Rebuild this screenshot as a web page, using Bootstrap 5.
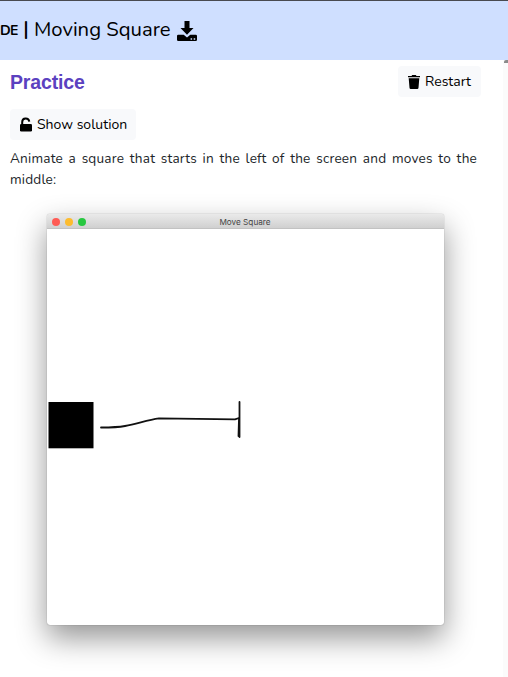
<!DOCTYPE html>
<html lang="en">
<head>
<meta charset="utf-8">
<meta name="viewport" content="width=device-width, initial-scale=1">
<title>Moving Square</title>
<link rel="stylesheet" href="https://cdn.jsdelivr.net/npm/bootstrap@5.3.0/dist/css/bootstrap.min.css">
<style>
body{font-family:Nunito,"Noto Sans",sans-serif;height:677px;overflow:hidden;background:#fff}
.topbar{height:60px;background:#cfdfff;border-top:1px solid #484a50;color:#000;white-space:nowrap;padding-bottom:3px}
.topbar .brand-end{font-size:14px;font-weight:700;width:18px;letter-spacing:-.7px;padding-top:2px}
.topbar .sep{font-size:20px;font-weight:600;margin-left:3px;width:10px;line-height:30px}
.topbar .page-name{font-size:20.3px;margin-left:3px;line-height:30px}
.topbar svg{margin-left:6px;margin-top:4px}
.content-pane{width:503px;padding:6px 22px 0 10px}
.side-track{width:5px;height:617px;background:#fbfbfb}
.side-thumb{height:3px;margin-left:1px;background:#8b8b8b;border-radius:2px 0 0 0}
h1{font:bold 19.5px/30px "Liberation Sans",Arial,sans-serif;letter-spacing:-.15px;color:#5b41c0;padding-top:1px}
.tool-btn{height:31px;background:#f8f9fb;border:0;border-radius:4px;color:#000;font-size:14px;line-height:21px;padding:0 0 0 9px;white-space:nowrap}
.tool-btn:hover{background:#eceef4}
.solution{width:126px;margin-top:12px}
.restart{width:83px}
.task{font-size:13.6px;line-height:21px;color:#212529;text-align:justify;width:467px;margin-top:8px;letter-spacing:.2px}
.mac-window{width:397px;height:411px;margin:24px 0 0 37px;border-radius:3px;background:#fff;box-shadow:0 0 1px rgba(0,0,0,.5),0 13px 30px rgba(0,0,0,.42)}
.mac-title{height:15px;background:linear-gradient(#eaeaea,#d0d0d0);border-bottom:1px solid #c2c2c2;border-radius:3px 3px 0 0;font:8.2px/16px Inter,sans-serif;color:#444}
.mac-title .dot{width:8px;height:8px;border-radius:50%}
.mac-title .lights{gap:5px;width:39px;padding:1px 0 0 5px}
.mac-title span{padding-top:1px}
.red{background:#ff5b54}.amber{background:#fdbc2e}.green{background:#27c840}
</style>
<script src="https://cdn.jsdelivr.net/npm/bootstrap@5.3.0/dist/js/bootstrap.bundle.min.js"></script>
</head>
<body>
<header class="topbar d-flex align-items-center">
  <span class="brand-end">DE</span><span class="sep text-center">|</span>
  <span class="page-name">Moving Square</span>
  <svg width="20" height="20" viewBox="0 0 20 20" aria-label="Download"><path d="M7.500 0h5v7h4L10 13.800 3.500 7h4z"/><path fill-rule="evenodd" d="M1.300 13.700h5.400L10 16.500l3.300-2.800h5.400q1.300 0 1.300 1.300v3.700q0 1.300-1.300 1.300H1.300Q0 20 0 18.700V15q0-1.300 1.300-1.300zM13.600 17.200v1.500h1.500v-1.500zM16.700 17.200v1.500h1.500v-1.500z"/></svg>
</header>
<div class="d-flex">
<main class="content-pane">
  <div class="d-flex justify-content-between align-items-end">
    <h1 class="m-0">Practice</h1>
    <button class="tool-btn restart d-flex align-items-center"><svg class="flex-shrink-0 me-1" width="14" height="14" viewBox="0 0 14 14"><path d="M1 1h3.500l.7-1h3.600l.7 1H13v1.200H1z"/><path d="M1.700 3.200h10.600l-.8 9.600q-.1 1.200-1.200 1.200H3.700q-1.100 0-1.200-1.200z"/></svg><span>Restart</span></button>
  </div>
  <button class="tool-btn solution d-flex align-items-center"><svg class="flex-shrink-0 me-1" width="14" height="15" viewBox="0 0 14 15"><path d="M3.200 8V5C3.200 .5 9.600 .2 10.300 4.600" fill="none" stroke="#000" stroke-width="2"/><rect x="1" y="7" width="12" height="7.500" rx="1.300"/></svg><span>Show solution</span></button>
  <p class="task mb-0">Animate a square that starts in the left of the screen and moves to the middle:</p>
  <section class="mac-window">
    <div class="mac-title d-flex align-items-center">
      <div class="lights d-flex"><i class="dot red"></i><i class="dot amber"></i><i class="dot green"></i></div>
      <span class="flex-grow-1 text-center pe-4 me-3">Move Square</span>
    </div>
    <svg class="d-block" width="397" height="396" viewBox="47 229 397 396">
      <rect x="48.500" y="402" width="45" height="46.300"/>
      <g fill="none" stroke="#111" stroke-width="1.800" stroke-linecap="round" stroke-linejoin="round"><path d="M101 427.500Q117 427.500 125 426C137 424 147 420 159 418.400L235 419.400 239 418"/><path d="M239.500 402V437M239 419L238.500 436"/></g>
    </svg>
  </section>
</main>
<div class="side-track"><div class="side-thumb"></div></div>
</div>
</body>
</html>
